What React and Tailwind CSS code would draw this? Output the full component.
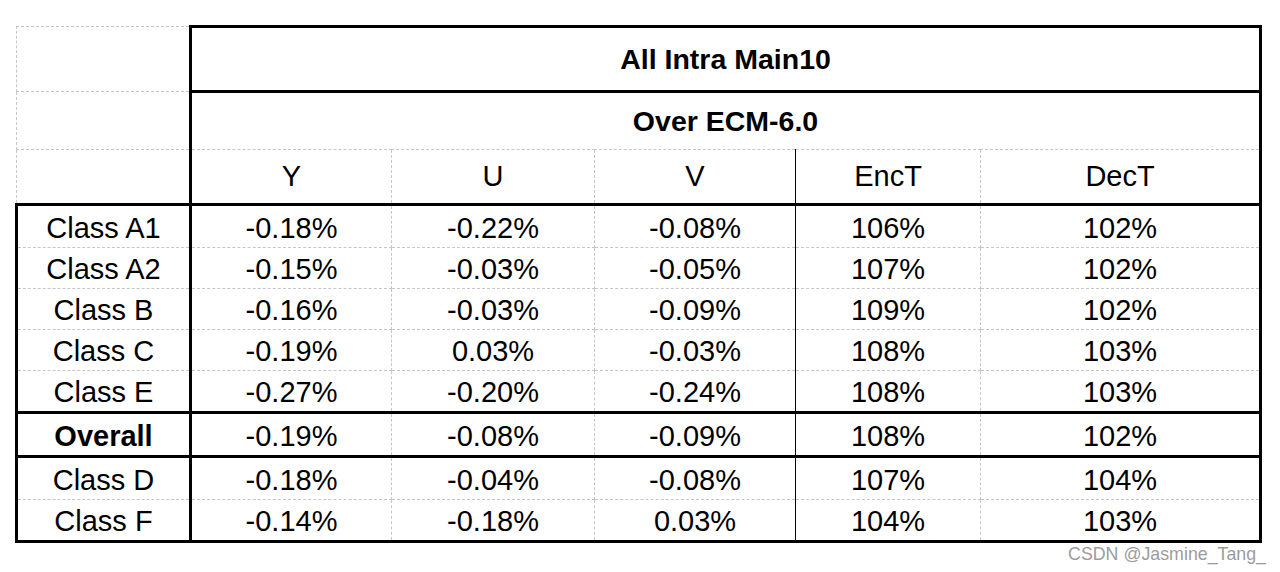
import React from 'react';

const rows = [
  { name: 'Class A1', y: '-0.18%', u: '-0.22%', v: '-0.08%', enc: '106%', dec: '102%', h: 'h-[43px]' },
  { name: 'Class A2', y: '-0.15%', u: '-0.03%', v: '-0.05%', enc: '107%', dec: '102%', h: 'h-[41px]' },
  { name: 'Class B', y: '-0.16%', u: '-0.03%', v: '-0.09%', enc: '109%', dec: '102%', h: 'h-[41px]' },
  { name: 'Class C', y: '-0.19%', u: '0.03%', v: '-0.03%', enc: '108%', dec: '103%', h: 'h-[41px]' },
  { name: 'Class E', y: '-0.27%', u: '-0.20%', v: '-0.24%', enc: '108%', dec: '103%', h: 'h-[42px]' },
];

const overall = { name: 'Overall', y: '-0.19%', u: '-0.08%', v: '-0.09%', enc: '108%', dec: '102%' };

const extra = [
  { name: 'Class D', y: '-0.18%', u: '-0.04%', v: '-0.08%', enc: '107%', dec: '104%', h: 'h-[43px]' },
  { name: 'Class F', y: '-0.14%', u: '-0.18%', v: '0.03%', enc: '104%', dec: '103%', h: 'h-[42px]' },
];

const cell = 'p-0 text-center align-middle leading-none whitespace-nowrap';
const dcell = 'px-0 pb-0 pt-[3px] text-center align-middle leading-none whitespace-nowrap';
// thin dashed excel gridlines
const gridR = 'border-r border-r-[#c6c6c6] [border-right-style:dashed]';
const gridB = 'border-b border-b-[#c6c6c6] [border-bottom-style:dashed]';
const gridL = 'border-l border-l-[#c6c6c6] [border-left-style:dashed]';
const gridT = 'border-t border-t-[#c6c6c6] [border-top-style:dashed]';

const DataRow = ({ row, top, bottom, bold, h }) => (
  <tr className={h}>
    <td className={`${dcell} border-x-[3px] border-x-black ${top} ${bottom} ${bold ? 'font-bold' : ''}`}>
      {row.name}
    </td>
    <td className={`${dcell} ${gridR} ${top} ${bottom}`}>{row.y}</td>
    <td className={`${dcell} ${gridR} ${top} ${bottom}`}>{row.u}</td>
    <td className={`${dcell} border-r border-r-black ${top} ${bottom}`}>{row.v}</td>
    <td className={`${dcell} ${gridR} ${top} ${bottom}`}>{row.enc}</td>
    <td className={`${dcell} border-r-[3px] border-r-black ${top} ${bottom}`}>{row.dec}</td>
  </tr>
);

export default function App() {
  return (
    <div className="bg-white w-[1280px] h-[572px] pt-[25px] pl-[15px] font-['Liberation_Sans',Arial,sans-serif] text-black text-[29px]">
      <table className="table-fixed border-collapse w-[1247px]">
        <colgroup>
          <col className="w-[174px]" />
          <col className="w-[201px]" />
          <col className="w-[203px]" />
          <col className="w-[201px]" />
          <col className="w-[185px]" />
          <col className="w-[280px]" />
        </colgroup>
        <tbody>
          {/* Header */}
          <tr className="h-[65px]">
            <td className={`${cell} ${gridT} ${gridL} ${gridB}`}></td>
            <td colSpan={5} className={`${cell} border-[3px] border-black font-bold text-[28.5px]`}>
              All Intra Main10
            </td>
          </tr>
          <tr className="h-[58px]">
            <td className={`${cell} ${gridL} ${gridB}`}></td>
            <td colSpan={5} className={`${cell} border-x-[3px] border-x-black ${gridB} font-bold text-[28.5px]`}>
              Over ECM-6.0
            </td>
          </tr>
          <tr className="h-[55px]">
            <td className={`${cell} ${gridL}`}></td>
            <td className={`${cell} border-l-[3px] border-l-black ${gridR}`}>Y</td>
            <td className={`${cell} ${gridR}`}>U</td>
            <td className={`${cell} border-r border-r-black`}>V</td>
            <td className={`${cell} ${gridR}`}>EncT</td>
            <td className={`${cell} border-r-[3px] border-r-black`}>DecT</td>
          </tr>

          {/* Classes */}
          {rows.map((row, i) => (
            <DataRow
              key={row.name}
              row={row}
              h={row.h}
              top={i === 0 ? 'border-t-[3px] border-t-black' : ''}
              bottom={i === rows.length - 1 ? 'border-b-[3px] border-b-black' : gridB}
            />
          ))}

          <DataRow
            row={overall}
            h="h-[44px]"
            bold
            top="border-t-[3px] border-t-black"
            bottom="border-b-[3px] border-b-black"
          />

          {extra.map((row, i) => (
            <DataRow
              key={row.name}
              row={row}
              h={row.h}
              top=""
              bottom={i === extra.length - 1 ? 'border-b-[3px] border-b-black' : gridB}
            />
          ))}
        </tbody>
      </table>

      <div className="w-[1251px] mt-[3px] text-right text-[17.8px] leading-none text-[#9c9c9c]">
        CSDN @Jasmine_Tang_
      </div>
    </div>
  );
}
